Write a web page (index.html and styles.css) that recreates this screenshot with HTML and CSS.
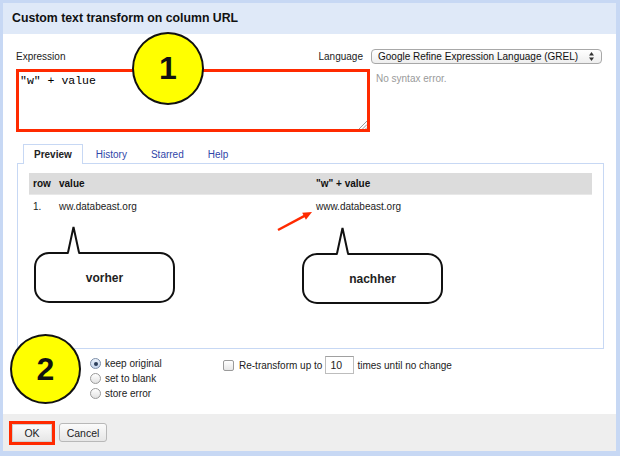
FILE: index.html
```html
<!DOCTYPE html>
<html>
<head>
<meta charset="utf-8">
<link rel="stylesheet" href="styles.css">
</head>
<body>
<div class="dialog">
  <div class="header">Custom text transform on column URL</div>
  <div class="body">
    <div class="row1">
      <span class="label">Expression</span>
      <div class="lang">
        <span class="label">Language</span>
        <div class="select">Google Refine Expression Language (GREL)
          <svg class="updown" width="5" height="9" viewBox="0 0 5 9"><polygon points="2.5,0 5,3.5 0,3.5" fill="#333"/><polygon points="0,5.5 5,5.5 2.5,9" fill="#333"/></svg>
        </div>
      </div>
    </div>
    <div class="row2">
      <div class="expr">"w" + value<svg class="grip" width="9" height="9" viewBox="0 0 9 9"><line x1="1" y1="9" x2="9" y2="1" stroke="#999" stroke-width="1"/><line x1="4.5" y1="9" x2="9" y2="4.5" stroke="#999" stroke-width="1"/><line x1="7.5" y1="9" x2="9" y2="7.5" stroke="#999" stroke-width="1"/></svg></div>
      <span class="status">No syntax error.</span>
    </div>
    <div class="tabs">
      <span class="tab active">Preview</span>
      <span class="tab">History</span>
      <span class="tab">Starred</span>
      <span class="tab">Help</span>
    </div>
    <div class="panel">
      <table class="preview">
        <colgroup><col class="c-row"><col class="c-val"><col class="c-new"></colgroup>
        <thead>
          <tr><th>row</th><th>value</th><th>"w" + value</th></tr>
        </thead>
        <tbody>
          <tr><td>1.</td><td>ww.databeast.org</td><td>www.databeast.org</td></tr>
        </tbody>
      </table>
    </div>
    <div class="options">
      <div class="radios">
        <div class="opt"><span class="radio checked"></span>keep original</div>
        <div class="opt"><span class="radio"></span>set to blank</div>
        <div class="opt"><span class="radio"></span>store error</div>
      </div>
      <div class="retransform">
        <span class="check"></span>
        <span>Re-transform up to</span>
        <span class="num">10</span>
        <span>times until no change</span>
      </div>
    </div>
  </div>
  <div class="footer">
    <span class="annot"><button class="btn ok">OK</button></span>
    <button class="btn cancel">Cancel</button>
  </div>

  <div class="marker m1">1</div>
  <div class="marker m2">2</div>
  <div class="bubble b1">vorher
    <svg class="tail" width="13" height="28" viewBox="0 0 13 28"><polygon points="1.5,28 6.5,1 11.5,28" fill="#fff"/><polyline points="1,26.5 6.5,1 12,26.5" fill="none" stroke="#111" stroke-width="2"/></svg>
  </div>
  <div class="bubble b2">nachher
    <svg class="tail" width="13" height="28" viewBox="0 0 13 28"><polygon points="1.5,28 6.5,1 11.5,28" fill="#fff"/><polyline points="1,26.5 6.5,1 12,26.5" fill="none" stroke="#111" stroke-width="2"/></svg>
  </div>
  <svg class="arrow" width="42" height="28" viewBox="0 0 42 28">
    <line x1="4" y1="22" x2="31" y2="7.7" stroke="#ff2a00" stroke-width="2.5"/>
    <polygon points="38,4 31.9,11.7 28.2,4.7" fill="#ff2a00"/>
  </svg>
</div>
</body>
</html>
```

FILE: styles.css
```css
html, body {
  margin: 0;
  padding: 0;
  background: #fff;
}
body {
  font-family: "Liberation Sans", Arial, sans-serif;
  font-size: 10px;
  color: #222;
}
.dialog {
  position: relative;
  width: 620px;
  height: 456px;
  box-sizing: border-box;
  border-style: solid;
  border-color: #c7d8f4;
  border-width: 3px 4px 5px 3px;
  display: flex;
  flex-direction: column;
  background: #fff;
}
.header {
  height: 31px;
  line-height: 31px;
  background: #dfe9f8;
  padding-left: 9px;
  font-weight: bold;
  font-size: 12.3px;
  color: #111;
}
.body {
  flex: 1;
  padding: 15px 14px 0 13px;
  display: flex;
  flex-direction: column;
}
.row1 {
  display: flex;
  justify-content: space-between;
  align-items: center;
  height: 15px;
}
.label {
  color: #222;
}
.lang {
  display: flex;
  align-items: center;
  gap: 8px;
}
.select {
  position: relative;
  width: 231px;
  height: 15px;
  box-sizing: border-box;
  border: 1px solid #a8a8a8;
  border-radius: 4px;
  background: linear-gradient(#ffffff, #eeeeee);
  padding-left: 6px;
  line-height: 13px;
  color: #111;
}
.updown {
  position: absolute;
  right: 7px;
  top: 2px;
}
.row2 {
  display: flex;
  align-items: flex-start;
  margin-top: 5px;
  gap: 6px;
}
.expr {
  position: relative;
  width: 354px;
  height: 63px;
  box-sizing: border-box;
  border: 3px solid #ff2a00;
  padding: 2px 1px;
  font-family: "Liberation Mono", "Courier New", monospace;
  font-size: 11.5px;
  line-height: 14px;
  white-space: pre;
  color: #000;
  background: #fff;
}
.grip {
  position: absolute;
  right: 0;
  bottom: 0;
}
.status {
  color: #9a9a9a;
  padding-top: 3px;
  line-height: 14px;
}
.tabs {
  display: flex;
  gap: 2px;
  margin-top: 12px;
  padding-left: 7px;
  position: relative;
  z-index: 1;
}
.tab {
  height: 19px;
  line-height: 19px;
  box-sizing: border-box;
  padding: 0 10px;
  border: 1px solid transparent;
  border-bottom: none;
  color: #2f46a8;
}
.tab.active {
  border-color: #c7d8f4;
  background: #fff;
  color: #222;
  font-weight: bold;
  height: 20px;
  margin-bottom: -1px;
}
.panel {
  height: 186px;
  box-sizing: border-box;
  border: 1px solid #c7d8f4;
  margin: 0 -2px 0 1px;
  padding: 9px 11px 0;
}
.preview {
  width: 100%;
  border-collapse: collapse;
  table-layout: fixed;
}
.c-row { width: 26px; }
.c-val { width: 257px; }
.preview th {
  background: #dcdcdc;
  border-bottom: 1px solid #e8e8e8;
  height: 21px;
  text-align: left;
  font-weight: bold;
  padding: 0 0 0 4px;
  color: #111;
}
.preview td {
  height: 22px;
  padding: 0 0 0 4px;
  color: #222;
}
.options {
  display: flex;
  align-items: flex-start;
  margin-top: 7px;
  padding-left: 74px;
}
.radios {
  width: 133px;
}
.opt {
  display: flex;
  align-items: center;
  height: 15px;
  gap: 4px;
}
.radio {
  width: 11px;
  height: 11px;
  box-sizing: border-box;
  border: 1px solid #9a9a9a;
  border-radius: 50%;
  background: linear-gradient(#ffffff, #e2e2e2);
  display: flex;
  align-items: center;
  justify-content: center;
}
.radio.checked {
  border-color: #7d8ea8;
  background: linear-gradient(#e9f1fb, #c6d6ee);
}
.radio.checked::after {
  content: "";
  width: 4px;
  height: 4px;
  border-radius: 50%;
  background: #2c3e5a;
}
.retransform {
  display: flex;
  align-items: center;
  height: 18px;
}
.check {
  width: 11px;
  height: 11px;
  box-sizing: border-box;
  border: 1px solid #9a9a9a;
  border-radius: 2px;
  background: linear-gradient(#ffffff, #e6e6e6);
  margin-right: 5px;
}
.num {
  width: 29px;
  height: 18px;
  box-sizing: border-box;
  border: 1px solid #bdbdbd;
  border-top-color: #a0a0a0;
  padding-left: 4px;
  line-height: 16px;
  margin: 0 3px;
  font-size: 10.5px;
}
.footer {
  height: 37px;
  background: #eeeeee;
  display: flex;
  align-items: center;
  padding-left: 6px;
}
.annot {
  display: flex;
  border: 3px solid #ff2a00;
}
.btn {
  font-family: "Liberation Sans", Arial, sans-serif;
  font-size: 10.5px;
  color: #222;
  margin: 0;
  padding: 0;
  box-sizing: border-box;
  border: 1px solid #b8b8b8;
  border-radius: 3px;
  background: linear-gradient(#fbfbfb, #e6e6e6);
}
.ok {
  width: 40px;
  height: 18px;
  border-color: #d0d0d0;
  border-radius: 0;
}
.cancel {
  width: 48px;
  height: 19px;
  margin-left: 4px;
}
.marker {
  position: absolute;
  box-sizing: border-box;
  border: 2px solid #111;
  border-radius: 50%;
  background: #ffff00;
  display: flex;
  align-items: center;
  justify-content: center;
  font-weight: bold;
  font-size: 32px;
  color: #111;
}
.m1 {
  left: 129px;
  top: 29px;
  width: 72px;
  height: 73px;
}
.m2 {
  left: 7px;
  top: 331px;
  width: 71px;
  height: 70px;
}
.bubble {
  position: absolute;
  box-sizing: border-box;
  width: 141px;
  height: 51px;
  border: 2px solid #111;
  border-radius: 15px;
  background: #fff;
  display: flex;
  align-items: center;
  justify-content: center;
  font-weight: bold;
  font-size: 12px;
  color: #222;
}
.b1 {
  left: 31px;
  top: 249px;
}
.b2 {
  left: 299px;
  top: 250px;
}
.tail {
  position: absolute;
  left: 31px;
  top: -28px;
}
.b2 .tail {
  left: 32px;
}
.arrow {
  position: absolute;
  left: 271px;
  top: 205px;
}
```
